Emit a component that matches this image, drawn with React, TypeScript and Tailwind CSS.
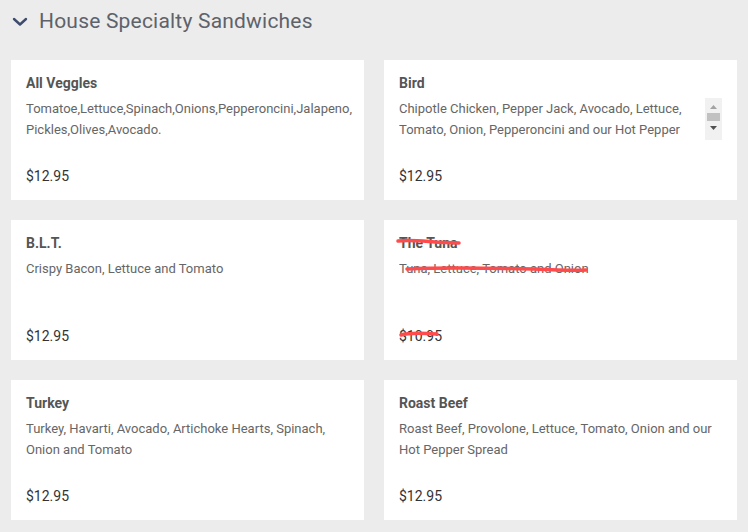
import React from 'react';

type Item = {
  name: string;
  desc: string;
  price: string;
  scroll?: boolean;
  soldOut?: boolean;
};

const items: Item[] = [
  { name: 'All Veggles', desc: 'Tomatoe,Lettuce,Spinach,Onions,Pepperoncini,Jalapeno, Pickles,Olives,Avocado.', price: '$12.95' },
  { name: 'Bird', desc: 'Chipotle Chicken, Pepper Jack, Avocado, Lettuce, Tomato, Onion, Pepperoncini and our Hot Pepper Spread', price: '$12.95', scroll: true },
  { name: 'B.L.T.', desc: 'Crispy Bacon, Lettuce and Tomato', price: '$12.95' },
  { name: 'The Tuna', desc: 'Tuna, Lettuce, Tomato and Onion', price: '$10.95', soldOut: true },
  { name: 'Turkey', desc: 'Turkey, Havarti, Avocado, Artichoke Hearts, Spinach, Onion and Tomato', price: '$12.95' },
  { name: 'Roast Beef', desc: 'Roast Beef, Provolone, Lettuce, Tomato, Onion and our Hot Pepper Spread', price: '$12.95' },
];

const FakeScrollbar: React.FC = () => (
  <div className="w-[17px] h-[42px] bg-[#f1f1f1] flex flex-col items-center shrink-0 ml-[20px] mr-[4px]">
    <svg width="9" height="6" viewBox="0 0 9 6" className="mt-[6px]">
      <path d="M1 5 L4.5 1 L8 5 Z" fill="#a3a3a3" />
    </svg>
    <div className="w-[13px] h-[8px] bg-[#c1c1c1] mt-[3px]" />
    <svg width="9" height="6" viewBox="0 0 9 6" className="mt-[4px]">
      <path d="M1 1 L8 1 L4.5 5 Z" fill="#505050" />
    </svg>
  </div>
);

// hand-drawn red marker lines over a sold-out card
const Strikes: React.FC = () => (
  <svg className="absolute left-0 top-0 pointer-events-none" width="353" height="140" viewBox="0 0 353 140">
    <path d="M14 21 C 30 19, 50 23, 75 23" stroke="#ff4b4b" strokeWidth="3.5" fill="none" strokeLinecap="round" />
    <path d="M23 49 C 60 47, 110 48, 150 49 C 170 50, 190 51, 202 50" stroke="#ff4b4b" strokeWidth="3.5" fill="none" strokeLinecap="round" />
    <path d="M17 115 C 26 112, 40 113, 53 114" stroke="#ff4b4b" strokeWidth="3.5" fill="none" strokeLinecap="round" />
  </svg>
);

const MenuCard: React.FC<{ item: Item }> = ({ item }) => (
  <div className="relative bg-white h-[140px] pl-[15px] pr-[11px] pt-[15px] flex flex-col">
    <div className="text-[14px] leading-[16px] font-bold text-[#555]">{item.name}</div>
    <div className="mt-[7px] h-[42px] flex">
      <p className="flex-1 overflow-hidden text-[13px] leading-[21px] text-[#666]">{item.desc}</p>
      {item.scroll && <FakeScrollbar />}
    </div>
    <div className="mt-auto mb-[14px] text-[14px] leading-5 text-[#333]">{item.price}</div>
    {item.soldOut && <Strikes />}
  </div>
);

export default function App() {
  return (
    <div className="w-[748px] h-[532px] bg-[#ececec] px-[11px] overflow-hidden" style={{ fontFamily: 'Roboto, "Liberation Sans", sans-serif' }}>
      <div className="flex items-center h-[42px] pt-[1px]">
        <svg width="16" height="10" viewBox="0 0 16 10" className="ml-[1px] mr-[11px]">
          <path d="M2 2 L8 7.5 L14 2" stroke="#3d4c6c" strokeWidth="2.4" fill="none" strokeLinecap="round" strokeLinejoin="round" />
        </svg>
        <h2 className="text-[21px] tracking-[0.2px] text-[#5d626b] leading-none">House Specialty Sandwiches</h2>
      </div>
      <div className="grid grid-cols-2 gap-[20px] mt-[18px]">
        {items.map((item) => (
          <MenuCard key={item.name} item={item} />
        ))}
      </div>
    </div>
  );
}
